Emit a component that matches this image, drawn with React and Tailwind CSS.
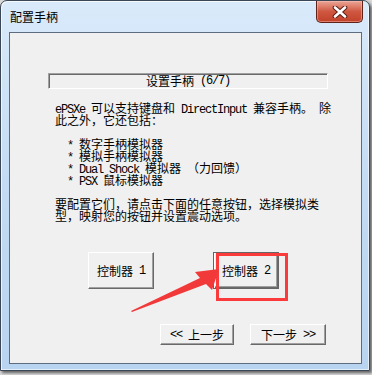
import React from 'react'

const cjk = "font-['Noto_Sans_CJK_SC',sans-serif]"

// half-width latin in the dialog's fixed font
function L({ children }) {
    return <span className="font-['Liberation_Mono',monospace] text-[12px] tracking-[-1.2px]">{children}</span>
}

function Btn({ children, className = '', active = false }) {
    return (
        <div
            className={
                'flex items-center justify-center bg-[#f0f0f0] text-[12px] leading-[12px] text-black whitespace-pre ' +
                (active
                    ? 'border border-[#646464] shadow-[inset_1px_1px_0_#ffffff,inset_-1px_-1px_0_#696969,inset_-2px_-2px_0_#a0a0a0] '
                    : 'border-t border-l border-t-white border-l-white border-b border-r border-b-[#696969] border-r-[#696969] shadow-[inset_-1px_-1px_0_#a0a0a0] ') +
                className
            }
        >
            {children}
        </div>
    )
}

function CloseButton() {
    return (
        <div className="mr-[6px] w-[47px] h-[22px] rounded-b-[5px] border border-t-0 border-[#5e2219] bg-gradient-to-b from-[#eaa597] via-[#cf5741] to-[#c2412a] shadow-[inset_0_0_0_1px_rgba(255,200,190,0.45)] flex items-center justify-center">
            <svg width="16" height="12" viewBox="0 0 16 12">
                <path d="M3 1.5 L13 10.5 M13 1.5 L3 10.5" stroke="#5a1d14" strokeWidth="4.6" strokeLinecap="round" />
                <path d="M3 1.5 L13 10.5 M13 1.5 L3 10.5" stroke="#ffffff" strokeWidth="2.6" strokeLinecap="round" />
            </svg>
        </div>
    )
}

export default function App() {
    const lines = [
        <><L>ePSXe </L>可以支持键盘和<L> DirectInput </L>兼容手柄。<L> </L>除</>,
        <>此之外，它还包括：</>,
        null,
        <><L>  * </L>数字手柄模拟器</>,
        <><L>  * </L>模拟手柄模拟器</>,
        <><L>  * Dual Shock </L>模拟器<L> </L>（力回馈）</>,
        <><L>  * PSX </L>鼠标模拟器</>,
        null,
        <>要配置它们，请点击下面的任意按钮，选择模拟类</>,
        <>型，映射您的按钮并设置震动选项。</>,
    ]

    return (
        <div className={'relative w-[372px] h-[375px] bg-[#d9d9d9] overflow-hidden ' + cjk}>
            {/* window */}
            <div className="w-[370px] h-[371px] flex flex-col rounded-t-[7px] border border-[#3b4756] bg-gradient-to-b from-[#d9eafa] via-[#c3dbf4] to-[#b9d4f0] shadow-[2px_2px_3px_rgba(0,0,0,0.55),inset_1px_1px_0_rgba(255,255,255,0.7),inset_-1px_-1px_0_rgba(255,255,255,0.6)]">
                {/* title bar */}
                <div className="h-[31px] flex justify-between items-start">
                    <div className="pl-[9px] mt-[8px] text-[12px] leading-[16px] text-black">配置手柄</div>
                    <CloseButton />
                </div>

                {/* client area */}
                <div className="ml-[8px] w-[353px] h-[332px] border border-[#5d6d7f] bg-[#f0f0f0] flex flex-col">
                    {/* step header */}
                    <div className="ml-[38px] mt-[40px] w-[280px] h-[16px] border-t border-l border-t-[#a0a0a0] border-l-[#a0a0a0] border-b border-r border-b-white border-r-white shadow-[inset_1px_1px_0_#696969] flex items-center justify-center text-[12px] leading-[12px] text-black whitespace-pre">
                        设置手柄<L> (6/7)</L>
                    </div>

                    {/* description */}
                    <div className="ml-[45px] mt-[13px] flex flex-col text-[12px] leading-[12px] text-black whitespace-pre">
                        {lines.map((ln, i) => (
                            <div key={i} className="h-[12px]">{ln}</div>
                        ))}
                    </div>

                    {/* controller buttons */}
                    <div className="mt-[30px] flex">
                        <Btn className="ml-[78px] w-[66px] h-[37px]">控制器<L> 1</L></Btn>
                        <Btn active className="ml-[59px] w-[66px] h-[37px]">控制器<L> 2</L></Btn>
                    </div>

                    {/* navigation */}
                    <div className="mt-[35px] flex">
                        <Btn className="ml-[150px] w-[74px] h-[21px]"><L>{'<< '}</L>上一步</Btn>
                        <Btn className="ml-[16px] w-[76px] h-[21px]">下一步<L>{' >>'}</L></Btn>
                    </div>
                </div>
            </div>

            {/* annotation: red highlight box */}
            <div className="absolute left-[216px] top-[253px] w-[72px] h-[48px] border-[3px] border-[#fb3b3b] pointer-events-none" />

            {/* annotation: arrow */}
            <svg className="absolute left-0 top-0 pointer-events-none" width="372" height="375" viewBox="0 0 372 375">
                <polygon
                    points="131,311 200,278 195,272 219,269 212,290 206,284 132,312"
                    fill="#f2393a"
                />
            </svg>
        </div>
    )
}
